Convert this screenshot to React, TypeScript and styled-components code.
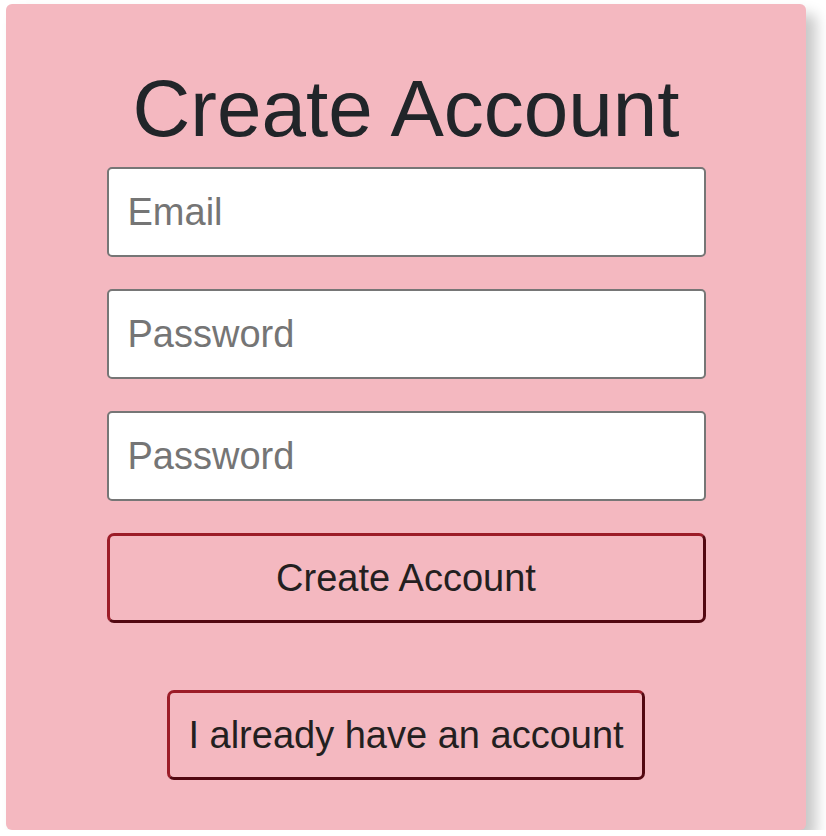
import React from 'react';
import styled, { createGlobalStyle } from 'styled-components';

const GlobalStyle = createGlobalStyle`
  html, body {
    margin: 0;
    padding: 0;
    background: #ffffff;
  }
  body {
    font-family: 'Liberation Sans', Arial, sans-serif;
    overflow: hidden;
  }
`;

const Page = styled.div`
  padding: 4px 0 0 6px;
`;

const Card = styled.form`
  width: 800px;
  box-sizing: border-box;
  background-color: #f4b8c0;
  border-radius: 6px;
  box-shadow: 10px 10px 14px rgba(0, 0, 0, 0.22);
  padding: 57px 0 50px;
  display: flex;
  flex-direction: column;
  align-items: center;
`;

const Title = styled.h1`
  margin: 0 0 10px;
  font-size: 80px;
  line-height: 96px;
  font-weight: 400;
  color: #212529;
`;

const Fields = styled.div`
  width: 599px;
  display: flex;
  flex-direction: column;
  gap: 32px;
`;

const Input = styled.input`
  box-sizing: border-box;
  width: 100%;
  height: 90px;
  padding: 0 19px;
  border: 2px solid #767676;
  border-radius: 5px;
  background: #ffffff;
  font-family: 'Liberation Sans', Arial, sans-serif;
  font-size: 38px;
  color: #212529;
  outline: none;

  &::placeholder {
    color: #757575;
  }
`;

const Button = styled.button<{ $wide?: boolean }>`
  box-sizing: border-box;
  width: ${({ $wide }) => ($wide ? '100%' : 'auto')};
  height: 90px;
  padding: 0 18px;
  border: 3px solid;
  border-color: #9c1c28 #520811 #520811 #9c1c28;
  border-radius: 7px;
  background: transparent;
  font-family: 'Liberation Sans', Arial, sans-serif;
  font-size: 38px;
  color: #231f20;
  cursor: pointer;
`;

const SecondaryRow = styled.div`
  margin-top: 67px;
  display: flex;
  justify-content: center;
`;

export default function App() {
  return (
    <>
      <GlobalStyle />
      <Page>
        <Card onSubmit={(e) => e.preventDefault()}>
          <Title>Create Account</Title>
          <Fields>
            <Input type="email" placeholder="Email" />
            <Input type="password" placeholder="Password" />
            <Input type="password" placeholder="Password" />
            <Button type="submit" $wide>
              Create Account
            </Button>
          </Fields>
          <SecondaryRow>
            <Button type="button">I already have an account</Button>
          </SecondaryRow>
        </Card>
      </Page>
    </>
  );
}
